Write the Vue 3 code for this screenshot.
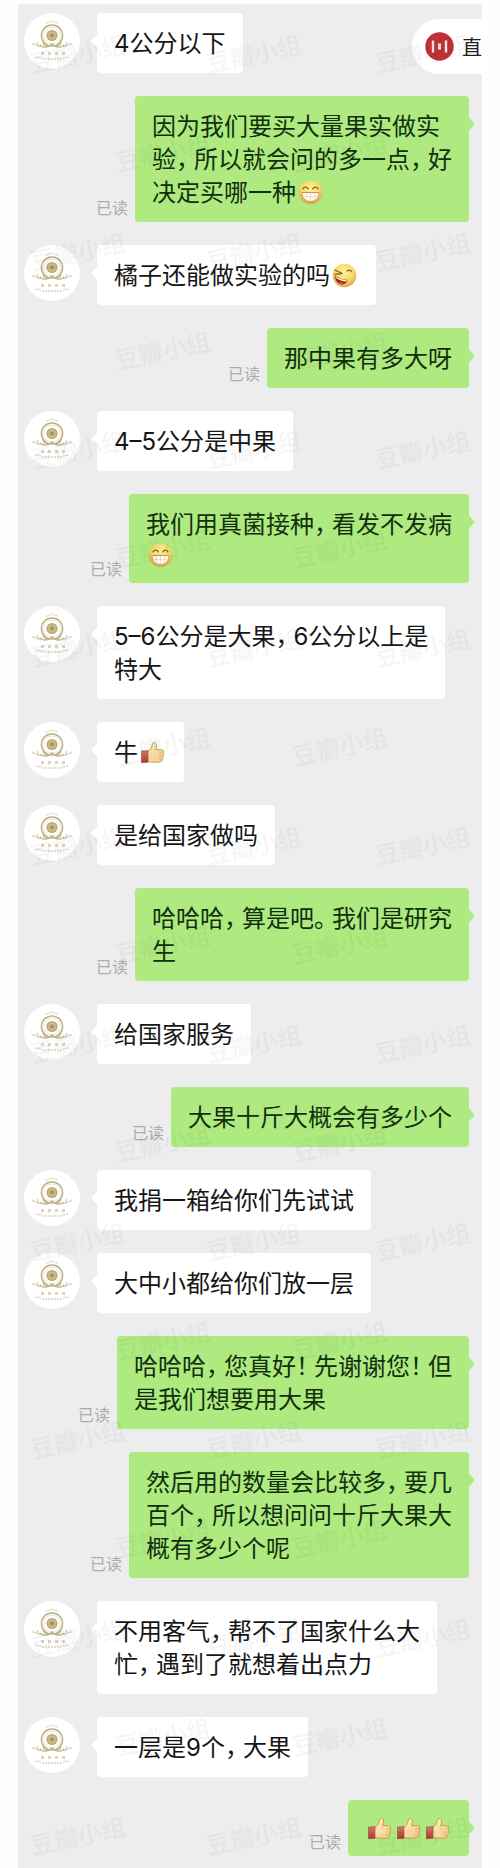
<template>
  <main class="chat">
    <ol class="messages">
      <li v-for="(msg, i) in messages" :key="i" class="row" :class="{ mine: msg.mine }">
        <svg v-if="!msg.mine" class="avatar" viewBox="0 0 56 56" aria-hidden="true">
          <use href="#emblem" />
        </svg>
        <span v-else class="read">已读</span>
        <p class="bubble">
          <span
            v-for="(line, j) in msg.lines"
            :key="j"
            class="line"
            :class="{ 'emoji-line': isEmojiOnly(line) }"
          ><template v-for="(part, k) in split(line)" :key="k"><svg
            v-if="emoji[part]"
            class="emoji"
            viewBox="0 0 25 25"
            role="img"
            :aria-label="part"
          ><use :href="emoji[part]" /></svg><span v-else-if="isPunct(part)" class="punct">{{ part }}</span><template v-else>{{ part }}</template></template></span>
        </p>
      </li>
    </ol>

    <button class="live" type="button">
      <svg class="live-icon" viewBox="0 0 29 29" aria-hidden="true">
        <circle cx="14.5" cy="14.5" r="14.2" fill="#bd3036" />
        <path d="M8 8.500v12M21 8.500v12" stroke="#fbe4e2" stroke-width="2.400" />
        <path d="M14.500 11.500v6" stroke="#fbe4e2" stroke-width="3" />
      </svg>
      <span>直</span>
    </button>

    <svg class="watermark" aria-hidden="true">
      <defs>
        <pattern id="wm" width="528" height="198" patternUnits="userSpaceOnUse">
          <text
            v-for="(mark, i) in marks"
            :key="i"
            :x="mark.x"
            :y="mark.y + 8"
            text-anchor="middle"
            :transform="`rotate(-12 ${mark.x} ${mark.y})`"
          >豆瓣小组</text>
        </pattern>
      </defs>
      <rect width="100%" height="100%" fill="url(#wm)" />
    </svg>

    <svg class="sprites" aria-hidden="true">
      <defs>
        <radialGradient id="face" cx="0.5" cy="0.35" r="0.65">
          <stop offset="0" stop-color="#fff0a0" />
          <stop offset="0.6" stop-color="#f8d968" />
          <stop offset="1" stop-color="#d9a048" />
        </radialGradient>
        <linearGradient id="hand" x1="0" y1="0" x2="1" y2="1">
          <stop offset="0" stop-color="#fff0bd" />
          <stop offset="1" stop-color="#f6ce8a" />
        </linearGradient>
        <linearGradient id="cuff" x1="0" y1="0" x2="0" y2="1">
          <stop offset="0" stop-color="#dc7868" />
          <stop offset="1" stop-color="#a83a34" />
        </linearGradient>

        <symbol id="emblem" viewBox="0 0 56 56">
          <circle cx="28" cy="28" r="28" fill="#fff" />
          <g fill="none" stroke="#bdb283">
            <circle cx="28" cy="22.5" r="10.6" stroke-width="1.5" />
            <circle cx="28" cy="22.5" r="8.4" stroke="#e4dec6" stroke-width="0.8" />
            <path d="M22 10.5c2-1.6 4-1 6-2.4c2 1.4 4 .8 6 2.4" stroke="#d8d0aa" stroke-width="1.2" stroke-dasharray="1.6 1" />
            <path d="M19 29c1 5 6 5 9 2c3 3 8 3 9-2M28 31c-4 4-9 4-12 1M28 31c4 4 9 4 12 1" stroke-width="1.2" />
            <path d="M8 31c4-1 5 3 9 3M48 31c-4-1-5 3-9 3M13 29l2 4M43 29l-2 4" stroke="#d3cba6" stroke-width="1.1" />
            <path d="M17 40.5h24" stroke="#dbd6c2" stroke-width="3" stroke-dasharray="3 4" />
            <path d="M12 44l5 1M44 44l-5 1M18 46h20" stroke="#d8d4c4" stroke-width="1.5" stroke-dasharray="2 1" />
          </g>
          <circle cx="28" cy="22.5" r="5.6" fill="#bbab76" />
          <circle cx="28" cy="22.5" r="3.4" fill="none" stroke="#d8cc9c" stroke-width="0.8" />
          <circle cx="28" cy="22.5" r="1.4" fill="#9a8a54" />
        </symbol>

        <symbol id="grin" viewBox="0 0 25 25">
          <circle cx="12.5" cy="12.5" r="11.8" fill="url(#face)" />
          <path d="M5 8.8c1.2-2.2 4-2.2 5.2 0M14.8 8.8c1.2-2.2 4-2.2 5.2 0" fill="none" stroke="#93601f" stroke-width="1.4" stroke-linecap="round" />
          <path d="M4 12.5h17c.2 5.600-3.200 9-8.500 9s-8.700-3.400-8.500-9z" fill="#fffdf2" stroke="#c48a3a" stroke-width="0.9" />
          <path d="M8.300 13v7M12.500 13v8.200M16.700 13v7M4.500 16.500h16" fill="none" stroke="#dccfa8" stroke-width="0.6" />
        </symbol>

        <symbol id="laugh" viewBox="0 0 25 25">
          <circle cx="12.5" cy="12.5" r="11.8" fill="url(#face)" />
          <path d="M3 7l7 3.500l-7 .8M15 8c1.500-1.500 3.500-1.200 4.500.5" fill="none" stroke="#86622a" stroke-width="1.3" stroke-linecap="round" stroke-linejoin="round" />
          <path d="M3 12.500c4 3 8 4.500 12.500 4.300c-.8 3.700-3.800 5.200-6.800 4.400c-3.600-1.200-5.700-4.400-5.700-8.700z" fill="#8f2a1a" />
          <path d="M3.500 13.200c3.600 2.600 7.300 3.800 11.300 3.800l-.7 1.600c-3.800 0-7.100-1.200-9.900-3.500z" fill="#fff6df" />
          <path d="M6.500 19.600c1.800-1.200 4-.8 5 .6c-1.600 1-3.500 1-5-.6z" fill="#e2583a" />
        </symbol>

        <symbol id="thumb" viewBox="0 0 25 25">
          <path d="M7.500 11.500c2.800-1 4.300-3.500 4.800-7.200c.3-2.800 4.200-2.400 4.200.6c0 2-.4 3.500-.8 4.800h5.800c2 0 2.600 2 1.600 3.100c1 1 .8 2.500-.2 3.200c.7 1.100.3 2.500-.6 3c.3 1.500-.4 2.700-2 2.900c-4.600.5-8.800.4-12.800-.4z" fill="url(#hand)" stroke="#c99a55" stroke-width="1" stroke-linejoin="round" />
          <path d="M19 12.900h3.800M19 16h3.500M18.500 19h3.400" stroke="#dcae6c" stroke-width="0.7" />
          <path d="M1.500 11l6.500-.3v11.600l-6.500.4z" fill="url(#cuff)" stroke="#9c4038" stroke-width="0.6" />
        </symbol>
      </defs>
    </svg>
  </main>
</template>

<script setup>
const emoji = {
  '😁': '#grin',
  '🤣': '#laugh',
  '👍': '#thumb',
}

// one repeat of the staggered watermark
const marks = [
  { x: 60, y: 51 },
  { x: 236, y: 51 },
  { x: 405, y: 51 },
  { x: 145, y: 150 },
  { x: 322, y: 150 },
]

const messages = [
  { lines: ['4公分以下'] },
  { mine: true, lines: ['因为我们要买大量果实做实', '验，所以就会问的多一点，好', '决定买哪一种😁'] },
  { lines: ['橘子还能做实验的吗🤣'] },
  { mine: true, lines: ['那中果有多大呀'] },
  { lines: ['4–5公分是中果'] },
  { mine: true, lines: ['我们用真菌接种，看发不发病', '😁'] },
  { lines: ['5–6公分是大果，6公分以上是', '特大'] },
  { lines: ['牛👍'] },
  { lines: ['是给国家做吗'] },
  { mine: true, lines: ['哈哈哈，算是吧。我们是研究', '生'] },
  { lines: ['给国家服务'] },
  { mine: true, lines: ['大果十斤大概会有多少个'] },
  { lines: ['我捐一箱给你们先试试'] },
  { lines: ['大中小都给你们放一层'] },
  { mine: true, lines: ['哈哈哈，您真好！先谢谢您！但', '是我们想要用大果'] },
  { mine: true, lines: ['然后用的数量会比较多，要几', '百个，所以想问问十斤大果大', '概有多少个呢'] },
  { lines: ['不用客气，帮不了国家什么大', '忙，遇到了就想着出点力'] },
  { lines: ['一层是9个，大果'] },
  { mine: true, lines: ['👍👍👍'] },
]

// text runs, punctuation and emoji each become their own part
function split(line) {
  return line.split(/(😁|🤣|👍|[，。！])/u).filter(Boolean)
}

function isPunct(part) {
  return /^[，。！]$/.test(part)
}

function isEmojiOnly(line) {
  return split(line).every((part) => emoji[part])
}
</script>

<style>
body { margin: 0; background: #fefefe; }
</style>

<style scoped>
.chat {
  position: relative;
  margin: 4px 18px 0;
  padding: 9px 13px 12px 6px;
  background: #ededed;
  overflow: hidden;
  font-family: Inter, "Noto Sans CJK SC", sans-serif;
}

.messages {
  list-style: none;
  margin: 0;
  padding: 0;
  display: flex;
  flex-direction: column;
  gap: 23px;
}

.row { display: flex; align-items: flex-start; gap: 17px; }
.row.mine { justify-content: flex-end; align-items: flex-end; gap: 7px; }

.avatar { width: 56px; height: 56px; flex: none; }

.read {
  flex: none;
  padding-bottom: 6px;
  color: #acacac;
  font-size: 16px;
  line-height: 16px;
}

.bubble {
  position: relative;
  margin: 0;
  padding: 14px 17px 13px;
  border-radius: 4px;
  background: #fff;
  color: #161616;
  font-size: 24px;
}
.mine .bubble { background: #aeea7f; color: #12300f; }

.bubble::before {
  content: '';
  position: absolute;
  top: 23px;
  left: -4px;
  width: 10px;
  height: 10px;
  border-radius: 2px;
  background: inherit;
  transform: rotate(45deg);
}
.mine .bubble::before { left: auto; right: -4px; }

.line { display: block; line-height: 33px; white-space: nowrap; }
.emoji-line { height: 29px; line-height: 29px; }
.punct { margin-right: -6px; }

.emoji {
  width: 25px;
  height: 25px;
  margin: 0 2px;
  vertical-align: -4px;
}

.live {
  position: absolute;
  top: 15px;
  right: 0;
  display: flex;
  align-items: center;
  gap: 8px;
  height: 55px;
  padding: 0 0 0 13px;
  border: none;
  border-radius: 28px 0 0 28px;
  background: #fff;
  color: #222;
  font-family: inherit;
  font-size: 20px;
  cursor: pointer;
}
.live-icon { width: 29px; height: 29px; }

.watermark {
  position: absolute;
  inset: 0;
  width: 100%;
  height: 100%;
  pointer-events: none;
}
.watermark text {
  font-size: 24px;
  font-weight: 500;
  fill: #000;
  fill-opacity: 0.04;
}

.sprites { position: absolute; width: 0; height: 0; }
</style>
